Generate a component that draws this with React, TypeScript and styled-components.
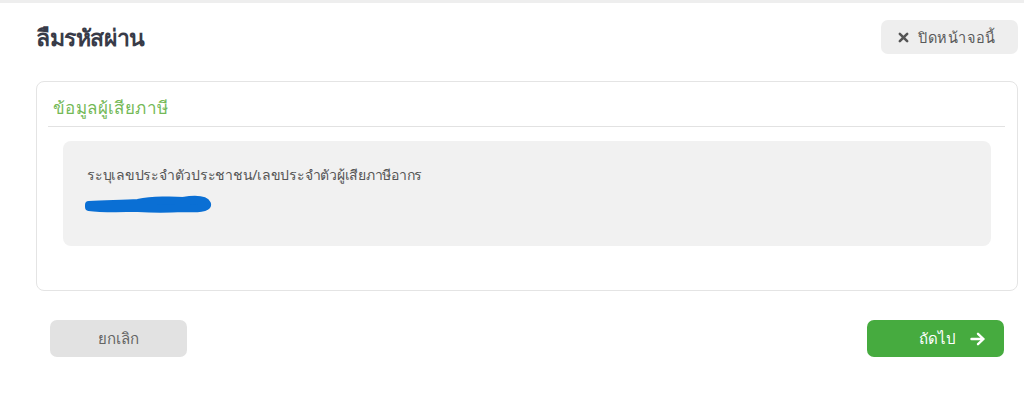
import React from "react";
import styled, { createGlobalStyle } from "styled-components";

const Global = createGlobalStyle`
  html, body { margin: 0; padding: 0; background: #ffffff; }
  body { font-family: "Noto Sans", "Open Sans", "DejaVu Sans", sans-serif; }
  * { box-sizing: border-box; }
`;

const Page = styled.div`
  width: 1024px;
  height: 403px;
  border-top: 3px solid #eeeeee;
  display: flex;
  flex-direction: column;
  padding: 17px 6px 0 36px;
`;

const Header = styled.div`
  display: flex;
  align-items: center;
  justify-content: space-between;
  height: 34px;
`;

const Title = styled.h1`
  margin: 2px 0 0 0;
  font-size: 23px;
  font-weight: 600;
  color: #383b48;
  letter-spacing: -0.4px;
`;

const CloseButton = styled.button`
  display: flex;
  align-items: center;
  gap: 9px;
  width: 137px;
  height: 34px;
  padding: 0 0 0 17px;
  border: none;
  border-radius: 7px;
  background: #eeeeee;
  color: #5a5a5a;
  font-family: inherit;
  font-size: 14.5px;
  letter-spacing: 0.6px;
`;

const Card = styled.section`
  margin-top: 27px;
  width: 982px;
  height: 210px;
  border: 1px solid #e4e4e4;
  border-radius: 8px;
  padding: 0 12px 0 11px;
  display: flex;
  flex-direction: column;
`;

const SectionTitle = styled.div`
  height: 45px;
  border-bottom: 1px solid #e2e2e2;
  display: flex;
  align-items: flex-end;
  padding: 0 0 5px 5px;
  color: #74b957;
  font-size: 17px;
  letter-spacing: 0.4px;
`;

const InfoBox = styled.div`
  margin: 14px 14px 0 15px;
  height: 105px;
  background: #f1f1f1;
  border-radius: 8px;
  padding: 23px 24px 0 24px;
  display: flex;
  flex-direction: column;
  gap: 8px;
`;

const Label = styled.div`
  font-size: 14px;
  color: #555555;
  letter-spacing: -0.25px;
`;

const Scribble = styled.svg`
  display: block;
  margin-left: -4px;
`;

const Actions = styled.div`
  margin-top: 29px;
  display: flex;
  justify-content: space-between;
  padding: 0 14px 0 14px;
`;

const ActionButton = styled.button<{ $primary?: boolean }>`
  width: 137px;
  height: 37px;
  border: none;
  border-radius: 7px;
  background: ${(p) => (p.$primary ? "#46ab3f" : "#e2e2e2")};
  color: ${(p) => (p.$primary ? "#ffffff" : "#646464")};
  font-family: inherit;
  font-size: 15px;
  display: flex;
  align-items: center;
  justify-content: ${(p) => (p.$primary ? "flex-end" : "center")};
  gap: 14px;
  padding: ${(p) => (p.$primary ? "0 18px 0 0" : "0")};
`;

export default function App() {
  return (
    <>
      <Global />
      <Page>
        <Header>
          <Title>ลืมรหัสผ่าน</Title>
          <CloseButton>
            <svg width="11" height="11" viewBox="0 0 12 12">
              <path d="M2 2 L10 10 M10 2 L2 10" stroke="#555" strokeWidth="2.8" strokeLinecap="round" />
            </svg>
            ปิดหน้าจอนี้
          </CloseButton>
        </Header>
        <Card>
          <SectionTitle>ข้อมูลผู้เสียภาษี</SectionTitle>
          <InfoBox>
            <Label>ระบุเลขประจำตัวประชาชน/เลขประจำตัวผู้เสียภาษีอากร</Label>
            <Scribble width="130" height="20" viewBox="0 0 130 20">
              <path
                d="M6 11 C25 10, 40 10, 55 9 C70 6, 90 6, 100 7 C112 5, 122 6, 124 10 C125 14, 115 15, 100 14 C85 15, 70 15, 55 14 C40 14, 20 15, 6 13 Z"
                stroke="#0a6fd4"
                strokeWidth="8"
                fill="#0a6fd4"
                strokeLinecap="round"
                strokeLinejoin="round"
              />
            </Scribble>
          </InfoBox>
        </Card>
        <Actions>
          <ActionButton>ยกเลิก</ActionButton>
          <ActionButton $primary>
            ถัดไป
            <svg width="16" height="14" viewBox="0 0 16 14">
              <path d="M1.5 7 H13.5 M8 1.8 L13.5 7 L8 12.2" stroke="#fff" strokeWidth="2.4" fill="none" strokeLinecap="round" strokeLinejoin="round" />
            </svg>
          </ActionButton>
        </Actions>
      </Page>
    </>
  );
}
